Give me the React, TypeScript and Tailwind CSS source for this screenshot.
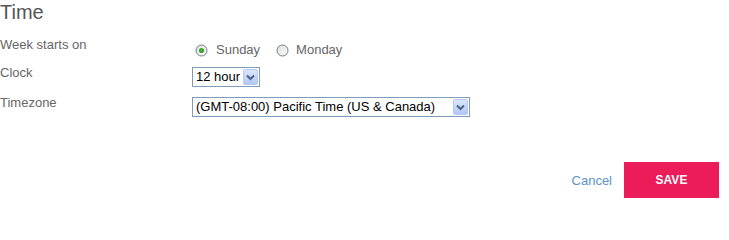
import React from "react";

function Radio({ checked }: { checked?: boolean }) {
  return (
    <svg width="13" height="13" viewBox="0 0 13 13" className="shrink-0">
      <defs>
        <linearGradient id={checked ? "rg1" : "rg2"} x1="0" y1="0" x2="1" y2="1">
          <stop offset="0" stopColor="#dcdcd6" />
          <stop offset="1" stopColor="#ffffff" />
        </linearGradient>
      </defs>
      <circle cx="6.5" cy="6.5" r="5.5" fill={`url(#${checked ? "rg1" : "rg2"})`} stroke="#6f7d89" strokeWidth="1" />
      {checked && <circle cx="6.5" cy="6.5" r="2.6" fill="#3fa83a" />}
    </svg>
  );
}

function SelectBox({ value, width }: { value: string; width: string }) {
  return (
    <div className={`flex items-center h-[20px] border border-[#7f9db9] bg-white ${width}`}>
      <span className="flex-1 pl-[3px] text-[13px] leading-[16px] text-black whitespace-nowrap overflow-hidden">
        {value}
      </span>
      <span className="flex items-center justify-center w-[15px] h-[16px] mr-[1px] rounded-[2px] border border-[#b6c9f2] bg-gradient-to-b from-[#dbe6fe] to-[#b4c8f6]">
        <svg width="9" height="7" viewBox="0 0 9 7">
          <path d="M1 1.5 L4.5 5 L8 1.5" fill="none" stroke="#4d6185" strokeWidth="2" />
        </svg>
      </span>
    </div>
  );
}

export default function App() {
  return (
    <div className="w-[729px] h-[219px] bg-white flex flex-col font-['Liberation_Sans',Arial,sans-serif]">
      <h2 className="text-[20px] leading-[24px] text-[#555]">Time</h2>

      <div className="flex mt-[13px]">
        <div className="w-[192px] text-[13px] leading-[16px] text-[#666]">Week starts on</div>
        <div className="flex items-center pt-[5px] pl-[3px] text-[13px] leading-[16px] text-[#666]">
          <Radio checked />
          <span className="ml-[8px]">Sunday</span>
          <span className="ml-[16px]">
            <Radio />
          </span>
          <span className="ml-[7px]">Monday</span>
        </div>
      </div>

      <div className="flex mt-[7px]">
        <div className="w-[192px] text-[13px] leading-[16px] text-[#666]">Clock</div>
        <div className="pt-[2px]">
          <SelectBox value="12 hour" width="w-[68px]" />
        </div>
      </div>

      <div className="flex mt-[8px]">
        <div className="w-[192px] text-[13px] leading-[16px] text-[#666]">Timezone</div>
        <div className="pt-[2px]">
          <SelectBox value="(GMT-08:00) Pacific Time (US & Canada)" width="w-[278px]" />
        </div>
      </div>

      <div className="mt-auto mb-[21px] flex items-center justify-end gap-[12px] pr-[10px]">
        <a className="pt-[2px] text-[13px] text-[#5b93cc] cursor-pointer">Cancel</a>
        <button className="w-[95px] h-[36px] bg-[#ec1b5a] text-white text-[12px] font-bold">
          SAVE
        </button>
      </div>
    </div>
  );
}
